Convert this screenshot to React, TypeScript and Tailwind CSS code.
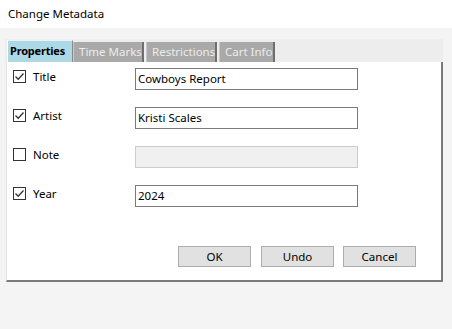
import React from "react";

function Check({ checked }: { checked: boolean }) {
  return (
    <div className="w-[13px] h-[13px] border border-[#333333] bg-white flex items-center justify-center shrink-0">
      {checked && (
        <svg width="11" height="11" viewBox="0 0 11 11">
          <path d="M1.5 5.5 L4.2 8.2 L9.5 2.5" fill="none" stroke="#333333" strokeWidth="1.3" />
        </svg>
      )}
    </div>
  );
}

function Row({ label, checked, value, disabled }: { label: string; checked: boolean; value: string; disabled?: boolean }) {
  return (
    <div className="flex h-[22px]">
      <div className="w-[128px] pl-[6px] pt-[2px] flex items-start gap-[7px]">
        <Check checked={checked} />
        <span className="leading-[13px] text-black">{label}</span>
      </div>
      <div
        className={
          disabled
            ? "w-[223px] h-[22px] border border-[#cccccc] bg-[#f0f0f0]"
            : "w-[223px] h-[22px] border border-[#7a7a7a] bg-white px-[2px] flex items-center text-black"
        }
      >
        {value}
      </div>
    </div>
  );
}

export default function App() {
  return (
    <div
      className="w-[452px] h-[329px] bg-[#f4f4f4] text-[11.5px] overflow-hidden"
      style={{ fontFamily: '"Noto Sans", "Open Sans", sans-serif' }}
    >
      <div className="h-[28px] bg-white flex items-center pl-[8px] pb-[1px] text-black">Change Metadata</div>
      <div className="mt-[11px] ml-[5px] w-[438px]">
        <div className="h-[23px] bg-[#ededed] flex items-end pl-[2px] whitespace-nowrap">
          <div className="h-[22px] w-[66px] bg-[#add8e6] border-l border-l-white border-r border-r-[#8a8a8a] border-t border-t-[#e8f4f8] flex items-center pl-[2px] font-bold text-black text-[11px] tracking-[-0.2px] overflow-hidden">
            Properties
          </div>
          <div className="h-[20px] w-[71px] bg-[#a9a9a9] border-l border-l-[#c8c8c8] border-r-2 border-r-[#6e6e6e] flex items-center pl-[5px] text-[#ececec] overflow-hidden">
            Time Marks
          </div>
          <div className="h-[20px] w-[71px] ml-[2px] bg-[#a9a9a9] border-l border-l-[#c8c8c8] border-r-2 border-r-[#6e6e6e] flex items-center pl-[5px] text-[#ececec] overflow-hidden">
            Restrictions
          </div>
          <div className="h-[20px] w-[56px] ml-[2px] bg-[#a9a9a9] border-l border-l-[#c8c8c8] border-r-2 border-r-[#6e6e6e] flex items-center pl-[5px] text-[#ececec] overflow-hidden">
            Cart Info
          </div>
        </div>
        <div className="ml-[1px] w-[437px] h-[220px] bg-white border-l border-l-[#e3e3e3] border-r-2 border-r-[#7a7a7a] border-b-2 border-b-[#7a7a7a] flex flex-col pt-[6px]">
          <div className="flex flex-col gap-[17px]">
            <Row label="Title" checked value="Cowboys Report" />
            <Row label="Artist" checked value="Kristi Scales" />
            <Row label="Note" checked={false} value="" disabled />
            <Row label="Year" checked value="2024" />
          </div>
          <div className="mt-[39px] pl-[171px] flex gap-[9px]">
            <div className="w-[73px] h-[21px] bg-[#e1e1e1] border border-[#adadad] flex items-center justify-center text-black">OK</div>
            <div className="w-[73px] h-[21px] ml-[1px] bg-[#e1e1e1] border border-[#adadad] flex items-center justify-center text-black">Undo</div>
            <div className="w-[73px] h-[21px] bg-[#e1e1e1] border border-[#adadad] flex items-center justify-center text-black">Cancel</div>
          </div>
        </div>
      </div>
    </div>
  );
}
